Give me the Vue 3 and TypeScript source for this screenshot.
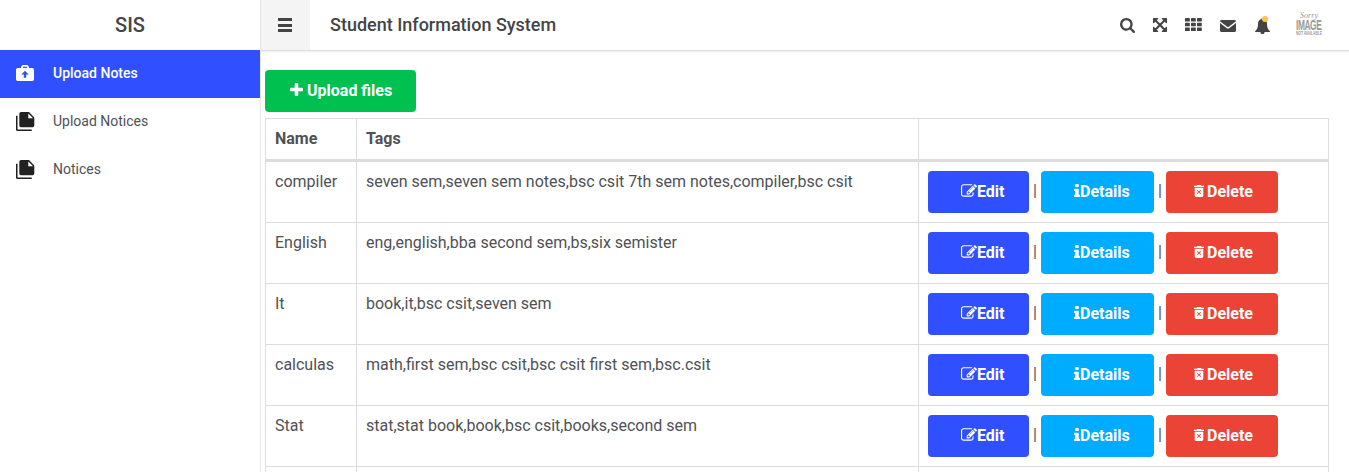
<script setup lang="ts">
interface NoteRow {
  name: string
  tags: string
}

const menu: { label: string; active: boolean }[] = [
  { label: 'Upload Notes', active: true },
  { label: 'Upload Notices', active: false },
  { label: 'Notices', active: false },
]

const rows: NoteRow[] = [
  { name: 'compiler', tags: 'seven sem,seven sem notes,bsc csit 7th sem notes,compiler,bsc csit' },
  { name: 'English', tags: 'eng,english,bba second sem,bs,six semister' },
  { name: 'It', tags: 'book,it,bsc csit,seven sem' },
  { name: 'calculas', tags: 'math,first sem,bsc csit,bsc csit first sem,bsc.csit' },
  { name: 'Stat', tags: 'stat,stat book,book,bsc csit,books,second sem' },
  { name: '', tags: '' },
]
</script>

<template>
  <div class="app">
    <aside class="sidebar">
      <div class="brand">SIS</div>
      <nav>
        <a v-for="item in menu" :key="item.label" class="item" :class="{ active: item.active }">
          <svg v-if="item.active" class="item-icon bag" viewBox="0 0 18 16">
            <path fill-rule="evenodd" d="M5 3V1.800L6.700 0h4.600L13 1.800V3h3.300Q18 3 18 4.700v9.600q0 1.700-1.700 1.700H1.700Q0 16 0 14.300V4.700Q0 3 1.700 3zM6.900 3h4.200V1.800H6.900zM9 5.800L5.300 9.600h2.500v3.100h2.400V9.600h2.500z" />
          </svg>
          <svg v-else class="item-icon" viewBox="0 0 18 19">
            <path d="M0 3.800h1.500v13.700h14.200V19H1.600Q0 19 0 17.400z" />
            <path fill-rule="evenodd" d="M5 0h8l5.300 5.400v8.200q0 1.700-1.700 1.700H5q-1.700 0-1.700-1.700V1.700Q3.300 0 5 0zM12.300 1.400v4.800h4.800z" />
          </svg>
          <span>{{ item.label }}</span>
        </a>
      </nav>
    </aside>

    <div class="main">
      <header class="topbar">
        <div class="burger"><i></i><i></i><i></i></div>
        <h1>Student Information System</h1>
        <div class="tools">
          <svg class="search" viewBox="64 128 1664 1664"><path d="M1216 832q0-185-131.500-316.500t-316.500-131.500-316.500 131.500-131.500 316.500 131.500 316.500 316.500 131.500 316.500-131.500 131.500-316.500zm512 832q0 52-38 90t-90 38q-54 0-90-38l-343-342q-179 124-399 124-143 0-273.500-55.500t-225-150-150-225-55.500-273.500 55.500-273.500 150-225 225-150 273.500-55.500 273.500 55.500 225 150 150 225 55.500 273.500q0 220-124 399l343 343q37 37 37 90z" /></svg>
          <svg class="expand" viewBox="128 128 1536 1536"><path d="M1411 541l-355 355 355 355 144-144q29-31 70-14 39 17 39 59v448q0 26-19 45t-45 19h-448q-42 0-59-40-17-39 14-69l144-144-355-355-355 355 144 144q31 30 14 69-17 40-59 40h-448q-26 0-45-19t-19-45v-448q0-42 40-59 39-17 69 14l144 144 355-355-355-355-144 144q-19 19-45 19-12 0-24-5-40-17-40-59v-448q0-26 19-45t45-19h448q42 0 59 40 17 39-14 69l-144 144 355 355 355-355-144-144q-31-30-14-69 17-40 59-40h448q26 0 45 19t19 45v448q0 42-39 59-13 5-25 5-26 0-45-19z" /></svg>
          <svg class="apps" viewBox="0 0 17 13">
            <template v-for="r in 3" :key="r">
              <rect v-for="c in 3" :key="c" :x="(c - 1) * 6" :y="(r - 1) * 4.700" width="4.800" height="3.600" rx="0.600" />
            </template>
          </svg>
          <svg class="mail" viewBox="0 0 16 12">
            <path d="M1.500 0h13Q16 0 16 1.300L8.800 6.700q-.8.600-1.600 0L0 1.300Q0 0 1.500 0zM0 3l6.600 5q1.400 1 2.800 0L16 3v7.500q0 1.500-1.500 1.500h-13Q0 12 0 10.500z" />
          </svg>
          <div class="bell">
            <svg viewBox="0 0 15 16"><path d="M6.500 1a1 1 0 0 1 2 0C11.300 1.600 12 3.800 12 6c0 3.500 1 5.600 3 7.200 0 .6-.4.900-1 .9H9.600a2.100 2.100 0 0 1-4.200 0H1c-.6 0-1-.3-1-.9C2 11.600 3 9.500 3 6c0-2.200.7-4.400 3.500-5z" /></svg>
            <b></b>
          </div>
          <svg class="avatar" viewBox="0 0 28 28">
            <text x="5" y="7" class="sorry" textLength="18">Sorry</text>
            <text x="0" y="0" class="image" transform="translate(1 18.500) scale(.6 1)" textLength="43">IMAGE</text>
            <text x="1" y="24" class="na" textLength="26" lengthAdjust="spacingAndGlyphs">NOT AVAILABLE</text>
          </svg>
        </div>
      </header>

      <main class="content">
        <button class="btn upload">
          <svg class="plus" viewBox="192 128 1408 1408"><path d="M1600 736v192q0 40-28 68t-68 28h-416v416q0 40-28 68t-68 28h-192q-40 0-68-28t-28-68v-416h-416q-40 0-68-28t-28-68v-192q0-40 28-68t68-28h416v-416q0-40 28-68t68-28h192q40 0 68 28t28 68v416h416q40 0 68 28t28 68z" /></svg>
          <span>Upload files</span>
        </button>
        <table>
          <colgroup><col class="c1" /><col class="c2" /><col class="c3" /></colgroup>
          <thead>
            <tr><th>Name</th><th>Tags</th><th></th></tr>
          </thead>
          <tbody>
            <tr v-for="(row, i) in rows" :key="i">
              <td>{{ row.name }}</td>
              <td>{{ row.tags }}</td>
              <td>
                <div v-if="row.name" class="actions">
                  <button class="btn edit">
                    <svg viewBox="0 128 1792 1536"><path d="M888 1184l116-116-152-152-116 116v56h96v96h56zm440-720q-16-16-33 1l-350 350q-17 17-1 33t33-1l350-350q17-17 1-33zm80 594v190q0 119-84.500 203.500t-203.500 84.500h-832q-119 0-203.500-84.500t-84.500-203.500v-832q0-119 84.500-203.500t203.500-84.500h832q63 0 117 25 15 7 18 23 3 17-9 29l-49 49q-14 14-32 8-23-6-45-6h-832q-66 0-113 47t-47 113v832q0 66 47 113t113 47h832q66 0 113-47t47-113v-126q0-13 9-22l64-64q15-15 35-7t20 29zm-96-738l288 288-672 672h-288v-288zm444 132l-92 92-288-288 92-92q28-28 68-28t68 28l152 152q28 28 28 68t-28 68z" /></svg>
                    <span>Edit</span>
                  </button>
                  <span class="sep">|</span>
                  <button class="btn details">
                    <svg viewBox="576 128 640 1408"><path d="M1216 1344v128q0 26-19 45t-45 19h-512q-26 0-45-19t-19-45v-128q0-26 19-45t45-19h64v-384h-64q-26 0-45-19t-19-45v-128q0-26 19-45t45-19h384q26 0 45 19t19 45v576h64q26 0 45 19t19 45zm-128-1152v192q0 26-19 45t-45 19h-256q-26 0-45-19t-19-45v-192q0-26 19-45t45-19h256q26 0 45 19t19 45z" /></svg>
                    <span>Details</span>
                  </button>
                  <span class="sep">|</span>
                  <button class="btn delete">
                    <svg viewBox="0 0 10 12"><path fill-rule="evenodd" d="M0 .7h2.600L3.300 0h3.400l.7.700H10V2H0zM.7 2.800h8.600v7.800q0 1.400-1.400 1.400H2.100Q.7 12 .7 10.600zM3.600 4.900l-.6.600L4.300 6.900 3 8.300l.6.600L5 7.500l1.400 1.400.6-.6-1.300-1.400L7 5.500l-.6-.6L5 6.300z" /></svg>
                    <span>Delete</span>
                  </button>
                </div>
              </td>
            </tr>
          </tbody>
        </table>
      </main>
    </div>
  </div>
</template>

<style>
body {
  margin: 0;
  overflow: hidden;
}
</style>

<style scoped>
.app {
  display: flex;
  height: 472px;
  overflow: hidden;
  background: #fff;
  color: #4f5155;
  font-family: Roboto, sans-serif;
}
.app * {
  box-sizing: border-box;
}
svg {
  display: block;
  flex: none;
  fill: currentColor;
}
.sidebar {
  width: 261px;
  flex: none;
  border-right: 1px solid #e8e8e8;
}
.brand {
  height: 50px;
  line-height: 50px;
  text-align: center;
  font-size: 20px;
  font-weight: 500;
  color: #444;
}
.item {
  display: flex;
  align-items: center;
  height: 48px;
  padding-left: 16px;
  font-size: 14px;
}
.item span {
  padding-bottom: 2px;
}
.item-icon {
  width: 18px;
  height: 19px;
  margin: 0 19px 1px 0;
  color: #212121;
  overflow: visible;
}
.active {
  background: #304ffe;
  color: #fff;
  font-weight: 500;
}
.item-icon.bag {
  height: 16px;
  color: #fff;
  margin-bottom: 2px;
}
.main {
  flex: 1;
  min-width: 0;
}
.topbar {
  display: flex;
  align-items: center;
  height: 51px;
  border-bottom: 1px solid #e0e0e0;
  box-shadow: 0 1px 1px rgba(0, 0, 0, 0.06);
  color: #444;
}
.burger {
  width: 49px;
  height: 50px;
  padding: 18px 18px 0 17px;
  background: #f4f4f4;
}
.burger i {
  display: block;
  height: 3px;
  margin-bottom: 2.500px;
  background: #444;
}
h1 {
  margin: 0 0 2px 20px;
  font-size: 18px;
  font-weight: 500;
}
.tools {
  display: flex;
  align-items: center;
  margin-left: auto;
  padding-right: 26px;
}
.search {
  width: 15px;
  height: 15px;
  margin: 1px 18px 0 0;
}
.expand {
  width: 14px;
  height: 14px;
  margin-right: 18px;
}
.apps {
  width: 17px;
  height: 13px;
  margin: 0 18px 1px 0;
}
.mail {
  width: 16px;
  height: 12px;
  margin: 1px 19px 0 0;
}
.bell {
  position: relative;
  width: 15px;
  height: 16px;
  margin: 1px 25px 0 0;
}
.bell b {
  position: absolute;
  left: 7px;
  top: -2px;
  width: 6px;
  height: 6px;
  border-radius: 50%;
  background: #ffc34d;
}
.avatar {
  width: 28px;
  height: 28px;
  color: #999;
  overflow: visible;
}
.sorry {
  font: italic 8px "Liberation Serif", serif;
}
.image {
  font: bold 14px "Liberation Sans", sans-serif;
}
.na {
  font: bold 5px "Liberation Sans", sans-serif;
}
.content {
  padding: 19px 20px 0 4px;
}
.btn {
  display: flex;
  align-items: center;
  height: 42px;
  padding: 0 0 2px;
  border: 0;
  border-radius: 4px;
  color: #fff;
  font: 700 16px Roboto, sans-serif;
  white-space: nowrap;
}
.upload {
  width: 151px;
  padding-left: 25px;
  background: #00c150;
}
.plus {
  width: 13px;
  height: 13px;
  margin: 0 4px 1px 0;
}
table {
  width: 1064px;
  margin-top: 6px;
  table-layout: fixed;
  border-collapse: separate;
  border-spacing: 0;
  border-top: 1px solid #ddd;
  border-left: 1px solid #ddd;
  font-size: 16px;
}
.c1 {
  width: 91px;
}
.c2 {
  width: 562px;
}
.c3 {
  width: 410px;
}
th,
td {
  padding: 9px 9px 0;
  border-right: 1px solid #ddd;
  border-bottom: 1px solid #ddd;
  text-align: left;
  vertical-align: top;
  white-space: nowrap;
}
th {
  height: 43px;
  border-bottom-width: 3px;
  font-weight: 700;
  line-height: 21px;
}
td {
  height: 61px;
  line-height: 21px;
}
.actions {
  display: flex;
}
.sep {
  width: 12px;
  text-align: center;
  padding-top: 9px;
}
.edit {
  width: 101px;
  padding-left: 33px;
  background: #304ffe;
}
.edit svg {
  width: 16px;
  height: 14px;
}
.details {
  width: 113px;
  padding-left: 33px;
  background: #00acff;
}
.details svg {
  width: 6px;
  height: 13px;
  margin-bottom: 1px;
}
.delete {
  width: 112px;
  padding-left: 28px;
  background: #eb4335;
}
.delete svg {
  width: 10px;
  height: 12px;
  margin-right: 3px;
}
</style>
